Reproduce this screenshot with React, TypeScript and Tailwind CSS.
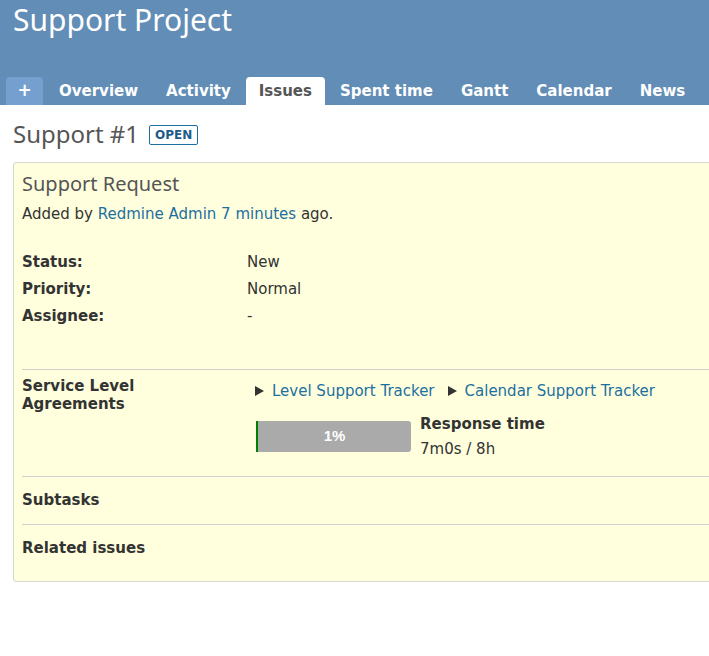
import React from "react";

const tabs = ["Overview", "Activity", "Issues", "Spent time", "Gantt", "Calendar", "News"];

const attrs = [
  ["Status:", "New"],
  ["Priority:", "Normal"],
  ["Assignee:", "-"],
];

const Arrow = () => (
  <svg width="9" height="10" viewBox="0 0 9 10" className="mr-[8px] shrink-0">
    <polygon points="0,0 9,5 0,10" fill="#333" />
  </svg>
);

export default function App() {
  return (
    <div className="w-[709px] h-[656px] overflow-hidden bg-white text-[15px] text-[#333] font-['DejaVu_Sans',sans-serif]">
      <header className="h-[105px] bg-[#628db6] flex flex-col">
        <h1 className="pl-[13px] text-[30px] leading-[40px] text-white font-['Noto_Sans',sans-serif]">
          Support Project
        </h1>
        <nav className="mt-auto flex pl-[6px] gap-[2px] whitespace-nowrap">
          <span className="w-[37px] h-[28px] mr-[1px] rounded-t-[4px] bg-[#759fcf] text-white font-bold text-[17px] flex items-center justify-center">
            +
          </span>
          {tabs.map((t) => (
            <span
              key={t}
              className={
                t === "Issues"
                  ? "h-[28px] px-[13px] rounded-t-[4px] bg-white text-[#555] font-bold leading-[28px]"
                  : "h-[28px] px-[13px] text-white font-bold leading-[28px]"
              }
            >
              {t}
            </span>
          ))}
        </nav>
      </header>

      <main className="pl-[13px]">
        <div className="flex items-center gap-[10px] mt-[13px] h-[32px]">
          <h2 className="text-[24px] text-[#555] font-['Noto_Sans',sans-serif] leading-[32px]">Support #1</h2>
          <span className="border border-[#1d6fa0] rounded-[2px] px-[5px] h-[20px] leading-[18px] text-[12px] font-bold text-[#1c5b8a] mt-[2px]">
            OPEN
          </span>
        </div>

        <div className="mt-[12px] w-[760px] bg-[#ffffdd] border border-[#d7d7d7] rounded-[3px] pl-[8px] pb-[9px]">
          <h3 className="text-[20px] text-[#555] font-['Noto_Sans',sans-serif] leading-[26px] mt-[8px]">
            Support Request
          </h3>
          <p className="mt-[7px] leading-[20px]">
            Added by <a className="text-[#1d6fa0]">Redmine Admin</a>{" "}
            <a className="text-[#1d6fa0]">7 minutes</a> ago.
          </p>

          <div className="mt-[25px] flex flex-col">
            {attrs.map(([k, v]) => (
              <div key={k} className="flex h-[27px] items-center">
                <span className="w-[225px] font-bold">{k}</span>
                <span>{v}</span>
              </div>
            ))}
          </div>

          <div className="mt-[39px] border-t border-[#cfcfcf] flex pt-[7px] pb-[14px]">
            <div className="w-[233px] font-bold leading-[18px]">
              Service Level
              <br />
              Agreements
            </div>
            <div className="flex flex-col">
              <div className="flex gap-[13px] mt-[4px] leading-[20px]">
                <span className="flex items-center">
                  <Arrow />
                  <a className="text-[#1d6fa0]">Level Support Tracker</a>
                </span>
                <span className="flex items-center">
                  <Arrow />
                  <a className="text-[#1d6fa0]">Calendar Support Tracker</a>
                </span>
              </div>
              <div className="flex mt-[11px] ml-[1px]">
                <div className="w-[155px] h-[31px] mt-[9px] bg-[#aaaaaa] border-l-2 border-[#008000] rounded-r-[3px] flex items-center justify-center text-white font-bold font-['Liberation_Sans',sans-serif] text-[15px]">
                  1%
                </div>
                <div className="ml-[9px] flex flex-col leading-[25px]">
                  <span className="font-bold">Response time</span>
                  <span>7m0s / 8h</span>
                </div>
              </div>
            </div>
          </div>

          <div className="border-t border-[#cfcfcf] h-[48px] flex items-center font-bold">Subtasks</div>
          <div className="border-t border-[#cfcfcf] h-[48px] flex items-center font-bold">Related issues</div>
        </div>
      </main>
    </div>
  );
}
